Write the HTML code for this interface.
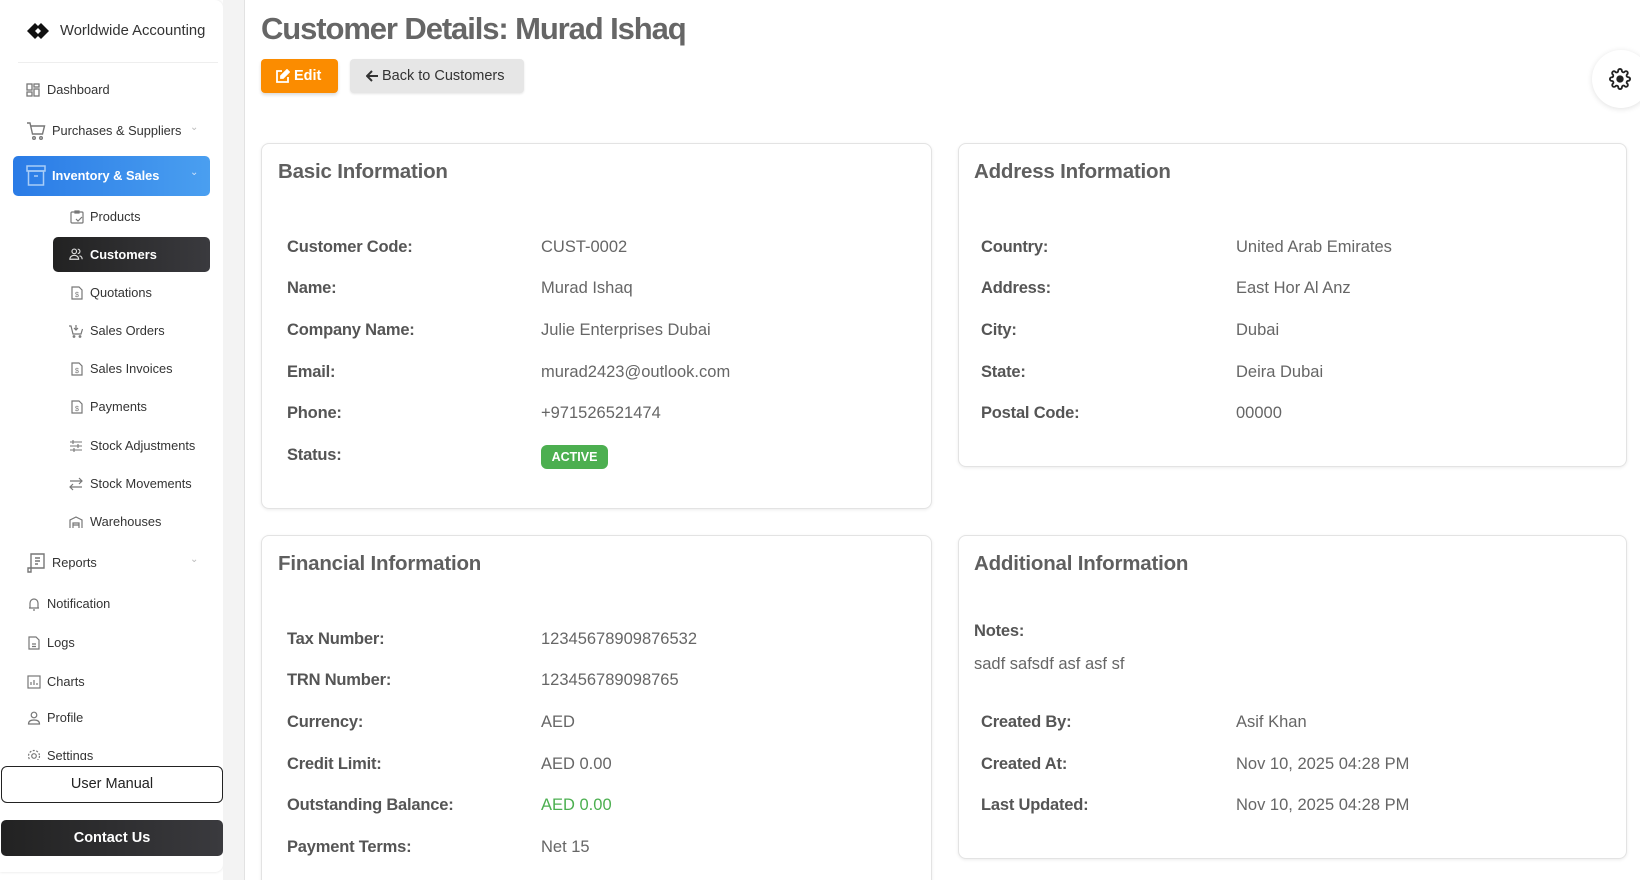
<!DOCTYPE html>
<html style="overflow:hidden;height:880px"><head><meta charset="utf-8">
<style>
*{margin:0;padding:0;box-sizing:border-box}
body{width:1640px;height:880px;overflow:hidden;background:#fff;font-family:"Liberation Sans",sans-serif;position:relative}
.a{position:absolute;white-space:nowrap}
#side{position:absolute;left:0;top:0;width:223px;height:872px;background:#fff;border-radius:0 8px 8px 0;box-shadow:0 0 3px rgba(0,0,0,.12)}
#gap{position:absolute;left:223px;top:0;width:22px;height:880px;background:#f3f3f3;border-right:1px solid #e2e2e2}
.si{position:absolute;font-size:12.8px;color:#333;line-height:16px;height:16px}
.ic{position:absolute;width:14px;height:14px}
.card{position:absolute;background:#fff;border:1px solid #e3e3e3;border-radius:8px;box-shadow:0 1px 3px rgba(0,0,0,.08)}
.h{position:absolute;font-size:20.5px;color:#5f5f5f;font-weight:600;line-height:24px;letter-spacing:-.2px}
.l{position:absolute;font-size:16.5px;color:#555;font-weight:bold;line-height:20px;letter-spacing:-.2px}
.v{position:absolute;font-size:16.5px;color:#666;line-height:20px}
</style></head><body>
<div id="side">
  <svg class="a" style="left:27px;top:23px" width="22" height="16" viewBox="0 0 22 16"><path d="M8 0L0 8l8 8 4-4-4-4 4-4zM14 0l-4 4 4 4-4 4 4 4 8-8z" fill="#111"/></svg>
  <div class="a" style="left:60px;top:23px;font-size:14.8px;color:#333">Worldwide Accounting</div>
  <div class="a" style="left:18px;top:62px;width:200px;height:1px;background:#eee"></div>

  <svg class="ic" style="left:26px;top:83px" viewBox="0 0 14 14" fill="none" stroke="#777" stroke-width="1.3"><rect x="1" y="1" width="5" height="6"/><rect x="8" y="1" width="5" height="3"/><rect x="1" y="9" width="5" height="4"/><rect x="8" y="6" width="5" height="7"/></svg>
  <div class="si" style="left:47px;top:82px">Dashboard</div>

  <svg class="a" style="left:26px;top:121px" width="20" height="20" viewBox="0 0 20 20" fill="none" stroke="#777" stroke-width="1.4"><path d="M1 2h3l2.5 11h10l2-8H5"/><circle cx="8" cy="17" r="1.3"/><circle cx="15" cy="17" r="1.3"/></svg>
  <div class="si" style="left:52px;top:123px">Purchases &amp; Suppliers</div>
  <div class="a" style="left:190px;top:122px;font-size:10px;color:#bbb">&#8964;</div>

  <div class="a" style="left:13px;top:156px;width:197px;height:40px;border-radius:5px;background:linear-gradient(90deg,#2a7be6,#4a9ff0)"></div>
  <svg class="a" style="left:26px;top:165px" width="20" height="21" viewBox="0 0 20 21" fill="none" stroke="#a9cdf7" stroke-width="1.5"><rect x="1" y="1" width="18" height="5"/><rect x="2.5" y="6" width="15" height="14"/><path d="M8 11h4"/></svg>
  <div class="si" style="left:52px;top:168px;color:#fff;font-weight:bold">Inventory &amp; Sales</div>
  <div class="a" style="left:190px;top:167px;font-size:10px;color:#cfe3fb">&#8964;</div>

  <svg class="ic" style="left:70px;top:210px" viewBox="0 0 14 14" fill="none" stroke="#777" stroke-width="1.2"><rect x="1" y="2" width="12" height="11" rx="1"/><path d="M5 1h4v2H5zM6 9l2 2 4-4"/></svg>
  <div class="si" style="left:90px;top:209px">Products</div>

  <div class="a" style="left:53px;top:237px;width:157px;height:35px;border-radius:5px;background:linear-gradient(90deg,#222,#3a3a3e)"></div>
  <svg class="ic" style="left:69px;top:247px" viewBox="0 0 16 14" fill="none" stroke="#ddd" stroke-width="1.3"><circle cx="6" cy="4" r="2.6"/><path d="M1 13c0-3 2.5-4.5 5-4.5s5 1.5 5 4.5z"/><path d="M10 1.5a2.5 2.5 0 010 5M12 9c2 .5 3 2 3 4"/></svg>
  <div class="si" style="left:90px;top:247px;color:#fff;font-weight:bold">Customers</div>

  <svg class="ic" style="left:70px;top:286px" viewBox="0 0 14 14" fill="none" stroke="#777" stroke-width="1.2"><path d="M2 1h7l3 3v9H2z"/><text x="5" y="11" font-size="7" fill="#777" stroke="none">$</text></svg>
  <div class="si" style="left:90px;top:285px">Quotations</div>
  <svg class="ic" style="left:69px;top:324px" viewBox="0 0 14 14" fill="none" stroke="#777" stroke-width="1.2"><path d="M0 2h2l2 8h8l1.5-5M7 1v5M5 4l2 2 2-2"/><circle cx="5" cy="12.5" r=".8"/><circle cx="11" cy="12.5" r=".8"/></svg>
  <div class="si" style="left:90px;top:323px">Sales Orders</div>
  <svg class="ic" style="left:70px;top:362px" viewBox="0 0 14 14" fill="none" stroke="#777" stroke-width="1.2"><path d="M2 1h7l3 3v9H2z"/><text x="5" y="11" font-size="7" fill="#777" stroke="none">$</text></svg>
  <div class="si" style="left:90px;top:361px">Sales Invoices</div>
  <svg class="ic" style="left:70px;top:400px" viewBox="0 0 14 14" fill="none" stroke="#777" stroke-width="1.2"><path d="M2 1h7l3 3v9H2z"/><text x="5" y="11" font-size="7" fill="#777" stroke="none">$</text></svg>
  <div class="si" style="left:90px;top:399px">Payments</div>
  <svg class="ic" style="left:69px;top:439px" viewBox="0 0 14 14" fill="none" stroke="#777" stroke-width="1.1"><path d="M1 3h12M1 7h12M1 11h12M4 1v4M9 5v4M5 9v4"/></svg>
  <div class="si" style="left:90px;top:438px">Stock Adjustments</div>
  <svg class="ic" style="left:69px;top:477px" viewBox="0 0 14 14" fill="none" stroke="#777" stroke-width="1.2"><path d="M1 4h12M10 1l3 3-3 3M13 10H1M4 7l-3 3 3 3"/></svg>
  <div class="si" style="left:90px;top:476px">Stock Movements</div>
  <svg class="ic" style="left:69px;top:515px" viewBox="0 0 14 14" fill="none" stroke="#777" stroke-width="1.2"><path d="M1 13V5l6-3 6 3v8M4 13V8h6v5M4 10h6"/></svg>
  <div class="si" style="left:90px;top:514px">Warehouses</div>

  <svg class="a" style="left:27px;top:553px" width="19" height="20" viewBox="0 0 19 20" fill="none" stroke="#777" stroke-width="1.4"><path d="M4 1h13v14H4zM4 15v4H1v-4h3M8 5h5M8 8h5M8 11h3"/></svg>
  <div class="si" style="left:52px;top:555px">Reports</div>
  <div class="a" style="left:190px;top:554px;font-size:10px;color:#bbb">&#8964;</div>

  <svg class="ic" style="left:27px;top:597px" viewBox="0 0 14 14" fill="none" stroke="#777" stroke-width="1.2"><path d="M3 11V6a4 4 0 018 0v5H2h10M6 13h2"/></svg>
  <div class="si" style="left:47px;top:596px">Notification</div>
  <svg class="ic" style="left:27px;top:636px" viewBox="0 0 14 14" fill="none" stroke="#777" stroke-width="1.2"><path d="M2 1h7l3 3v9H2zM5 8h4M5 10.5h4"/></svg>
  <div class="si" style="left:47px;top:635px">Logs</div>
  <svg class="ic" style="left:27px;top:675px" viewBox="0 0 14 14" fill="none" stroke="#777" stroke-width="1.2"><rect x="1" y="1" width="12" height="12"/><path d="M4 10V7M7 10V5M10 10V8"/></svg>
  <div class="si" style="left:47px;top:674px">Charts</div>
  <svg class="ic" style="left:27px;top:711px" viewBox="0 0 14 14" fill="none" stroke="#777" stroke-width="1.2"><circle cx="7" cy="4" r="2.8"/><path d="M1.5 13c0-3 2.5-4 5.5-4s5.5 1 5.5 4z"/></svg>
  <div class="si" style="left:47px;top:710px">Profile</div>
  <div class="a" style="left:0;top:745px;width:223px;height:15px;overflow:hidden">
    <svg class="ic" style="left:27px;top:4px" viewBox="0 0 14 14" fill="none" stroke="#777" stroke-width="1.2"><circle cx="7" cy="7" r="2.3"/><circle cx="7" cy="7" r="5.5" stroke-dasharray="2 1.5"/></svg>
    <div class="si" style="left:47px;top:3px">Settings</div>
  </div>

  <div class="a" style="left:1px;top:766px;width:222px;height:37px;border:1px solid #222;border-radius:6px;background:#fff;font-size:14.5px;color:#222;text-align:center;line-height:35px">User Manual</div>
  <div class="a" style="left:1px;top:820px;width:222px;height:36px;border-radius:5px;background:linear-gradient(90deg,#222,#3a3a3e);font-size:14.5px;color:#fff;font-weight:bold;text-align:center;line-height:36px">Contact Us</div>
</div>
<div id="gap"></div>

<div class="a" style="left:261px;top:10px;font-size:31px;font-weight:bold;color:#666;letter-spacing:-1.1px;line-height:38px">Customer Details: Murad Ishaq</div>
<div class="a" style="left:261px;top:59px;width:77px;height:34px;background:#fb8c00;border-radius:4px;box-shadow:0 2px 3px rgba(0,0,0,.15);color:#fff;font-size:14.5px;font-weight:bold;line-height:34px;padding-left:14px">
 <svg style="position:absolute;left:14px;top:10px" width="15" height="15" viewBox="0 0 15 15" fill="none" stroke="#fff" stroke-width="1.8"><path d="M7 2H2v11h11V8"/><path d="M12 1l2 2-6 6H6V7z" fill="#fff"/></svg>
 <span style="margin-left:19px">Edit</span></div>
<div class="a" style="left:350px;top:59px;width:174px;height:34px;background:#e6e6e6;border-radius:4px;box-shadow:0 1px 2px rgba(0,0,0,.1);color:#333;font-size:14.5px;line-height:34px;padding-left:32px">Back to Customers
 <svg style="position:absolute;left:16px;top:11px" width="13" height="12" viewBox="0 0 13 12" fill="none" stroke="#333" stroke-width="2"><path d="M12 6H2M6 1L1 6l5 5"/></svg></div>

<div class="a" style="left:1592px;top:50px;width:58px;height:58px;border-radius:50%;background:#fff;box-shadow:0 1px 6px rgba(0,0,0,.12)"></div>
<svg class="a" style="left:1609px;top:68px" width="22" height="22" viewBox="0 0 24 24" fill="none" stroke="#222" stroke-width="2"><circle cx="12" cy="12" r="3" fill="#222"/><path d="M19.4 15a1.7 1.7 0 00.3 1.8l.1.1a2 2 0 11-2.8 2.8l-.1-.1a1.7 1.7 0 00-1.8-.3 1.7 1.7 0 00-1 1.5V21a2 2 0 11-4 0v-.1a1.7 1.7 0 00-1.1-1.5 1.7 1.7 0 00-1.8.3l-.1.1a2 2 0 11-2.8-2.8l.1-.1a1.7 1.7 0 00.3-1.8 1.7 1.7 0 00-1.5-1H3a2 2 0 110-4h.1a1.7 1.7 0 001.5-1.1 1.7 1.7 0 00-.3-1.8l-.1-.1a2 2 0 112.8-2.8l.1.1a1.7 1.7 0 001.8.3H9a1.7 1.7 0 001-1.5V3a2 2 0 114 0v.1a1.7 1.7 0 001 1.5 1.7 1.7 0 001.8-.3l.1-.1a2 2 0 112.8 2.8l-.1.1a1.7 1.7 0 00-.3 1.8V9a1.7 1.7 0 001.5 1H21a2 2 0 110 4h-.1a1.7 1.7 0 00-1.5 1z"/></svg>

<!-- Basic -->
<div class="card" style="left:261px;top:143px;width:671px;height:366px"></div>
<div class="h" style="left:278px;top:160px">Basic Information</div>
<div class="l" style="left:287px;top:237px">Customer Code:</div><div class="v" style="left:541px;top:237px">CUST-0002</div>
<div class="l" style="left:287px;top:278px">Name:</div><div class="v" style="left:541px;top:278px">Murad Ishaq</div>
<div class="l" style="left:287px;top:320px">Company Name:</div><div class="v" style="left:541px;top:320px">Julie Enterprises Dubai</div>
<div class="l" style="left:287px;top:362px">Email:</div><div class="v" style="left:541px;top:362px">murad2423@outlook.com</div>
<div class="l" style="left:287px;top:403px">Phone:</div><div class="v" style="left:541px;top:403px">+971526521474</div>
<div class="l" style="left:287px;top:445px">Status:</div>
<div class="a" style="left:541px;top:445px;width:67px;height:24px;background:#4caf50;border-radius:6px;color:#fff;font-size:12.5px;font-weight:bold;text-align:center;line-height:24px">ACTIVE</div>

<!-- Address -->
<div class="card" style="left:958px;top:143px;width:669px;height:324px"></div>
<div class="h" style="left:974px;top:160px">Address Information</div>
<div class="l" style="left:981px;top:237px">Country:</div><div class="v" style="left:1236px;top:237px">United Arab Emirates</div>
<div class="l" style="left:981px;top:278px">Address:</div><div class="v" style="left:1236px;top:278px">East Hor Al Anz</div>
<div class="l" style="left:981px;top:320px">City:</div><div class="v" style="left:1236px;top:320px">Dubai</div>
<div class="l" style="left:981px;top:362px">State:</div><div class="v" style="left:1236px;top:362px">Deira Dubai</div>
<div class="l" style="left:981px;top:403px">Postal Code:</div><div class="v" style="left:1236px;top:403px">00000</div>

<!-- Financial -->
<div class="card" style="left:261px;top:535px;width:671px;height:355px"></div>
<div class="h" style="left:278px;top:552px">Financial Information</div>
<div class="l" style="left:287px;top:629px">Tax Number:</div><div class="v" style="left:541px;top:629px">12345678909876532</div>
<div class="l" style="left:287px;top:670px">TRN Number:</div><div class="v" style="left:541px;top:670px">123456789098765</div>
<div class="l" style="left:287px;top:712px">Currency:</div><div class="v" style="left:541px;top:712px">AED</div>
<div class="l" style="left:287px;top:754px">Credit Limit:</div><div class="v" style="left:541px;top:754px">AED 0.00</div>
<div class="l" style="left:287px;top:795px">Outstanding Balance:</div><div class="v" style="left:541px;top:795px;color:#4caf50">AED 0.00</div>
<div class="l" style="left:287px;top:837px">Payment Terms:</div><div class="v" style="left:541px;top:837px">Net 15</div>

<!-- Additional -->
<div class="card" style="left:958px;top:535px;width:669px;height:324px"></div>
<div class="h" style="left:974px;top:552px">Additional Information</div>
<div class="l" style="left:974px;top:621px">Notes:</div>
<div class="v" style="left:974px;top:654px">sadf safsdf asf asf sf</div>
<div class="l" style="left:981px;top:712px">Created By:</div><div class="v" style="left:1236px;top:712px">Asif Khan</div>
<div class="l" style="left:981px;top:754px">Created At:</div><div class="v" style="left:1236px;top:754px">Nov 10, 2025 04:28 PM</div>
<div class="l" style="left:981px;top:795px">Last Updated:</div><div class="v" style="left:1236px;top:795px">Nov 10, 2025 04:28 PM</div>
</body></html>
